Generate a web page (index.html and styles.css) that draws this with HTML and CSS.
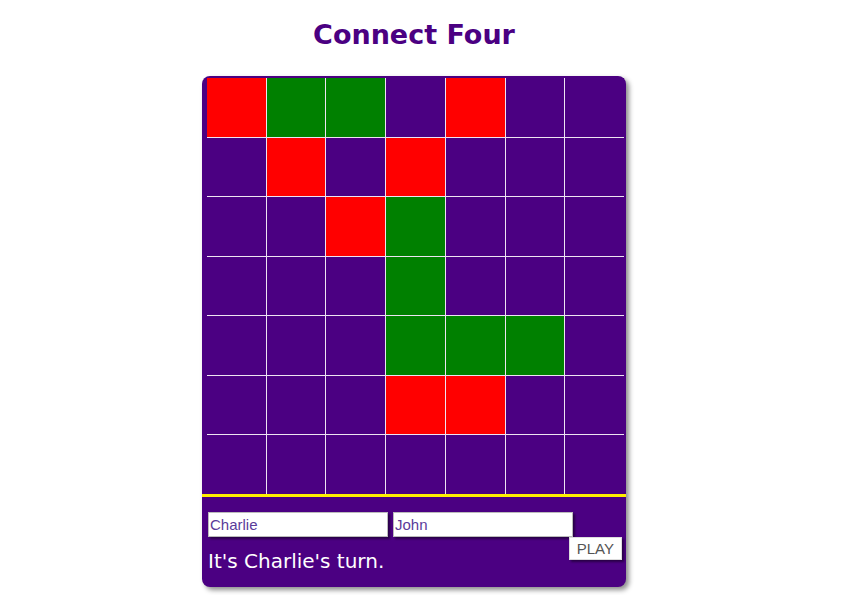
FILE: index.html
```html
<!DOCTYPE html>
<html lang="en">
<head>
  <meta charset="UTF-8" />
  <title>Connect Four</title>
  <link rel="stylesheet" href="styles.css">
</head>
<body>
  <div class="game">
    <h1>Connect Four</h1>
    <div class="board">
      <div class="grid" id="grid"></div>
      <div class="controls">
        <div class="players">
          <input type="text" id="player1" value="Charlie">
          <input type="text" id="player2" value="John">
        </div>
        <div class="status">
          <p id="turn">It's Charlie's turn.</p>
          <button id="play">PLAY</button>
        </div>
      </div>
    </div>
  </div>

  <script>
    const board = [
      'RGGPRPP',
      'PRPRPPP',
      'PPRGPPP',
      'PPPGPPP',
      'PPPGGGP',
      'PPPRRPP',
      'PPPPPPP'
    ];

    const colors = { R: 'red', G: 'green', P: 'empty' };

    const grid = document.getElementById('grid');
    grid.innerHTML = board.map(row =>
      row.split('').map(c => `<div class="cell ${colors[c]}"></div>`).join('')
    ).join('');
  </script>
</body>
</html>
```
FILE: styles.css
```css
body {
  margin: 0;
  padding: 8px;
  font-family: "Comic Sans MS", "DejaVu Sans", sans-serif;
  background: #fff;
}
.game {
  width: 424px;
  margin-left: 194px;
}
h1 {
  text-align: center;
  color: #4b0082;
  font-size: 27px;
  font-weight: bold;
  margin: 9px 0 23px;
  line-height: 36px;
}
.board {
  background: #4b0082;
  border-radius: 8px;
  box-shadow: 3px 3px 5px rgba(0, 0, 0, 0.45);
  padding-top: 2px;
}
.grid {
  display: grid;
  grid-template-columns: repeat(7, 1fr);
  grid-template-rows: repeat(7, 1fr);
  gap: 1px;
  width: 417px;
  height: 416px;
  margin-left: 5px;
  background: #eee4f2;
}
.cell {
  background: #4b0082;
}
.cell.red {
  background: #ff0000;
}
.cell.green {
  background: #008000;
}
.controls {
  border-top: 3px solid #ffee00;
  padding: 15px 4px 14px 6px;
}
.players {
  display: flex;
  gap: 5px;
}
.players input {
  width: 180px;
  height: 25px;
  box-sizing: border-box;
  border: 1px solid #bbb;
  box-shadow: 2px 2px 2px rgba(0, 0, 0, 0.45);
  font-family: Arial, "Liberation Sans", sans-serif;
  font-size: 15px;
  color: #5a3b9a;
  padding: 1px 1px;
}
.status {
  display: flex;
  justify-content: space-between;
  align-items: flex-start;
}
.status p {
  margin: 12px 0 0;
  color: #fff;
  font-size: 20px;
}
button {
  font-family: Arial, "Liberation Sans", sans-serif;
  font-size: 15px;
  color: #555;
  background: #fff;
  border: 1px solid #ddd;
  box-shadow: 2px 2px 2px rgba(0, 0, 0, 0.45);
  padding: 2px 7px;
  height: 23px;
  cursor: pointer;
}
```
